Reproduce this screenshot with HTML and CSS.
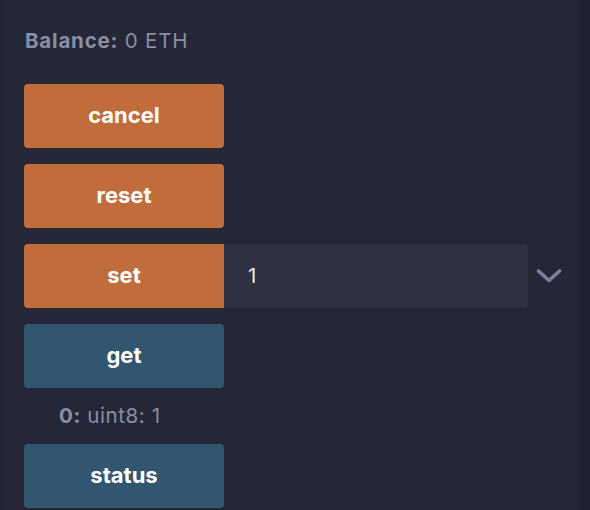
FILE: index.html
```html
<!DOCTYPE html>
<html>
<head>
<meta charset="utf-8">
<link rel="stylesheet" href="styles.css">
</head>
<body>
<div class="frame">
  <div class="edge-left"></div>
  <main class="panel">
    <div class="balance"><b>Balance:</b> 0 ETH</div>
    <div class="actions">
      <button class="btn btn-tx">cancel</button>
      <button class="btn btn-tx">reset</button>
      <div class="row">
        <button class="btn btn-tx">set</button>
        <div class="input">1</div>
        <svg class="chev" width="26" height="16" viewBox="0 0 26 16"><path d="M2.5 3 L13 12.5 L23.5 3" fill="none" stroke="#7b809e" stroke-width="3.6" stroke-linecap="round" stroke-linejoin="round"/></svg>
      </div>
      <button class="btn btn-call">get</button>
      <div class="result"><b>0:</b> uint8: 1</div>
      <button class="btn btn-call">status</button>
    </div>
  </main>
  <div class="edge-right"></div>
</div>
</body>
</html>
```

FILE: styles.css
```css
html, body {
  margin: 0;
  padding: 0;
  background: #252736;
  font-family: Inter, "Noto Sans", sans-serif;
}
.frame {
  display: flex;
  width: 590px;
  height: 510px;
  overflow: hidden;
}
.edge-left {
  width: 3px;
  background: #212230;
  flex: none;
}
.edge-right {
  width: 10px;
  background: #21222f;
  flex: none;
}
.panel {
  flex: 1;
  padding: 29px 0 0 21px;
}
.balance {
  color: #8a8da4;
  font-size: 20.5px;
  line-height: 24px;
  letter-spacing: 0.8px;
  margin-left: 1px;
}
.balance b {
  font-weight: 700;
}
.actions {
  display: flex;
  flex-direction: column;
  gap: 16px;
  margin-top: 31px;
}
.btn {
  width: 200px;
  height: 64px;
  border: none;
  border-radius: 4px;
  color: #ffffff;
  font-family: Inter, "Noto Sans", sans-serif;
  font-weight: 700;
  font-size: 22px;
  padding: 0 0 2px 0;
  flex: none;
}
.btn-tx {
  background: #c06d3b;
}
.btn-call {
  background: #325570;
}
.row {
  display: flex;
  align-items: center;
}
.row .btn {
  border-radius: 4px 0 0 4px;
}
.input {
  width: 304px;
  height: 64px;
  box-sizing: border-box;
  background: #2f3042;
  border-radius: 0 4px 4px 0;
  color: #e6e7ee;
  font-size: 20.5px;
  display: flex;
  align-items: center;
  padding: 0 0 2px 24px;
}
.chev {
  margin-left: 8px;
  margin-top: -1px;
}
.result {
  color: #8a8da4;
  font-size: 20.5px;
  line-height: 24px;
  letter-spacing: 0.6px;
  margin-left: 35px;
}
.result b {
  font-weight: 700;
}
```
